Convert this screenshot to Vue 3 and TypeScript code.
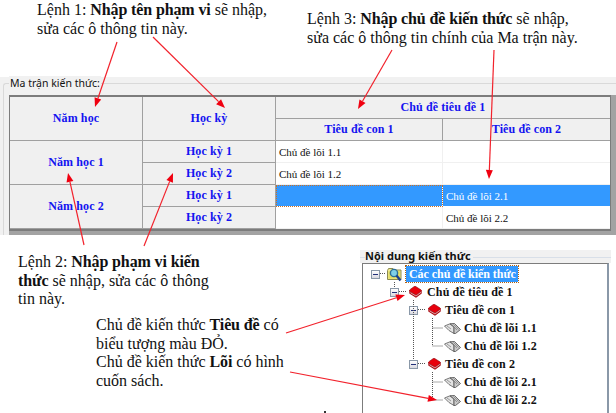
<script setup lang="ts">
interface Arrow { x1: number; y1: number; x2: number; y2: number }
const rawArrows: Arrow[] = [
  { x1: 117, y1: 42, x2: 95, y2: 107 },
  { x1: 153, y1: 37, x2: 225, y2: 108 },
  { x1: 392, y1: 50, x2: 358, y2: 109 },
  { x1: 494, y1: 50, x2: 489, y2: 179 },
  { x1: 84, y1: 245, x2: 68, y2: 173 },
  { x1: 144, y1: 246, x2: 173, y2: 173 },
  { x1: 286, y1: 333, x2: 405, y2: 295 },
  { x1: 290, y1: 372, x2: 437, y2: 400 },
]
const arrows = rawArrows.map((a) => {
  const dx = a.x2 - a.x1
  const dy = a.y2 - a.y1
  const l = Math.hypot(dx, dy)
  const ux = dx / l
  const uy = dy / l
  const bx = a.x2 - ux * 9
  const by = a.y2 - uy * 9
  const points = `${a.x2},${a.y2} ${bx - uy * 3.5},${by + ux * 3.5} ${bx + uy * 3.5},${by - ux * 3.5}`
  return { ...a, bx, by, points }
})

const dots = [
  'M380 273.5H386',
  'M394.5 282V287M399 291.5H407',
  'M413.5 300V359M418 309.5H426M418 363.5H426',
  'M432.5 318V346H443M432.5 328H443',
  'M432.5 372V400H443M432.5 382H443',
]

type Kind = 'folder' | 'red' | 'open'
interface Row { level: number; kind: Kind; label: string; selected?: boolean }
const rows: Row[] = [
  { level: 0, kind: 'folder', label: 'Các chủ đề kiến thức', selected: true },
  { level: 1, kind: 'red', label: 'Chủ đề tiêu đề 1' },
  { level: 2, kind: 'red', label: 'Tiêu đề con 1' },
  { level: 3, kind: 'open', label: 'Chủ đề lõi 1.1' },
  { level: 3, kind: 'open', label: 'Chủ đề lõi 1.2' },
  { level: 2, kind: 'red', label: 'Tiêu đề con 2' },
  { level: 3, kind: 'open', label: 'Chủ đề lõi 2.1' },
  { level: 3, kind: 'open', label: 'Chủ đề lõi 2.2' },
]
</script>

<template>
  <div class="page">
    <section class="matrix">
      <span class="legend">Ma trận kiến thức:</span>
      <div class="frame">
        <div class="grid">
          <div class="h span-r2">Năm học</div>
          <div class="h span-r2">Học kỳ</div>
          <div class="h span-c2 last-col">Chủ đề tiêu đề 1</div>
          <div class="h">Tiêu đề con 1</div>
          <div class="h last-col">Tiêu đề con 2</div>

          <div class="h span-r2">Năm học 1</div>
          <div class="h">Học kỳ 1</div>
          <div class="d">Chủ đề lõi 1.1</div>
          <div class="d last-col"></div>
          <div class="h">Học kỳ 2</div>
          <div class="d">Chủ đề lõi 1.2</div>
          <div class="d last-col"></div>

          <div class="h span-r2">Năm học 2</div>
          <div class="h">Học kỳ 1</div>
          <div class="d sel focus"></div>
          <div class="d sel last-col">Chủ đề lõi 2.1</div>
          <div class="h">Học kỳ 2</div>
          <div class="d"></div>
          <div class="d last-col">Chủ đề lõi 2.2</div>
        </div>
      </div>
    </section>

    <section class="tree-wrap">
      <div class="tree-head"><span class="tree-title">Nội dung kiến thức</span></div>
      <div class="tree">
        <div v-for="r in rows" :key="r.label" class="row" :class="'lv' + r.level">
          <span v-if="r.level < 3" class="exp"><i></i></span>
          <svg v-if="r.kind === 'folder'" class="ic-folder" viewBox="0 0 15 15" width="15" height="15">
            <path d="M0.5 3.5 L1.5 1.5 H6 L7 3 H14 V12.5 H0.5 Z" fill="#f0ea8c" stroke="#8c8a50" />
            <rect x="1.5" y="4" width="11.5" height="7.5" fill="#e4dc64" />
            <circle cx="7" cy="6" r="3.6" fill="#7fd0e8" stroke="#2a6f9a" stroke-width="1.4" />
            <path d="M9.5 8.5 L13.5 13.5" stroke="#1c3f8c" stroke-width="2.4" />
          </svg>
          <svg v-else-if="r.kind === 'red'" class="ic-red" viewBox="0 0 13 12" width="13" height="12">
            <path d="M0.3 5 Q0.3 4 1.5 3.2 L5 0.7 Q6 0 7 0.7 L12.2 4 Q13 4.6 12.2 5.2 L7 9 Z" fill="#e8000c" stroke="#8a0008" stroke-width="0.6" />
            <path d="M0.3 5 V7.6 L7 11.7 L12.7 7.4 V4.8 L7 9 Z" fill="#a80810" />
            <path d="M1.4 6.7 L7 10 L12 6.3" fill="none" stroke="#f3c9c9" stroke-width="0.8" />
          </svg>
          <svg v-else class="ic-open" viewBox="0 0 17 11" width="17" height="11">
            <path d="M0.5 3 L6 0.8 L10 4 V10.5 L5 7.5 Z" fill="#e4e4e4" stroke="#6a6a6a" stroke-width="0.9" />
            <path d="M6 0.8 L10.5 0.5 L16.5 6.5 L11.5 10.5 L10 10.5 V4 Z" fill="#c8c8c8" stroke="#5a5a5a" stroke-width="0.9" />
            <path d="M7.5 1.5 L13 7 M9.5 1.5 L14.5 6.5 M3 3 L7 6" stroke="#7a7a7a" stroke-width="0.7" fill="none" />
          </svg>
          <span class="label" :class="{ selected: r.selected }">{{ r.label }}</span>
        </div>
      </div>
    </section>

    <p class="note n1">Lệnh 1: <b>Nhập tên phạm vi</b> sẽ nhập,<br />sửa các ô thông tin này.</p>
    <p class="note n3">Lệnh 3: <b>Nhập chủ đề kiến thức</b> sẽ nhập,<br />sửa các ô thông tin chính của Ma trận này.</p>
    <p class="note n2">Lệnh 2: <b>Nhập phạm vi kiến</b><br /><b>thức</b> sẽ nhập, sửa các ô thông<br />tin này.</p>
    <p class="note n4">Chủ đề kiến thức <b>Tiêu đề</b> có<br />biểu tượng màu ĐỎ.<br />Chủ đề kiến thức <b>Lõi</b> có hình<br />cuốn sách.</p>
    <span class="speck"></span>

    <svg class="overlay" viewBox="0 0 616 413" width="616" height="413">
      <path v-for="d in dots" :key="d" :d="d" fill="none" stroke="#555" stroke-width="1" stroke-dasharray="1 1" />
      <g v-for="a in arrows" :key="a.x1">
        <line :x1="a.x1" :y1="a.y1" :x2="a.bx" :y2="a.by" stroke="#f2222c" stroke-width="1.2" />
        <polygon :points="a.points" fill="#f00010" />
      </g>
    </svg>
  </div>
</template>

<style>
html, body { margin: 0; background: #fff; }
</style>

<style scoped>
.page {
  position: relative;
  width: 616px;
  height: 413px;
  overflow: hidden;
  background: #fff;
  display: flex;
  flex-direction: column;
}
.matrix {
  position: relative;
  margin-top: 77px;
  height: 158px;
  box-sizing: border-box;
  background: #f1f1f1;
  padding: 18px 0 0 9px;
}
.matrix::before {
  content: "";
  position: absolute;
  left: 3px;
  top: 6px;
  right: 0;
  bottom: 0;
  border: 1px solid #d9d9d9;
  border-right: 0;
  border-bottom: 0;
  border-top-left-radius: 3px;
}
.legend {
  position: absolute;
  left: 9px;
  top: -1px;
  padding: 0 1px;
  background: #f1f1f1;
  font: 10.5px/14px "Noto Sans", sans-serif;
  color: #111;
}
.frame {
  position: relative;
  height: 140px;
  background: #a3a3a3;
}
.grid {
  display: grid;
  grid-template-columns: 133px 133px 167px 167px;
  grid-template-rows: repeat(6, 22px);
  width: 600px;
  border-top: 2px solid #7c7c7c;
  border-left: 1px solid #7c7c7c;
  border-bottom: 2px solid #7c7c7c;
  border-right: 1px solid #7c7c7c;
  font: 12px "Liberation Serif", serif;
  background: #fff;
}
.h {
  display: flex;
  align-items: center;
  justify-content: center;
  background: #f0f0f0;
  color: #1414f0;
  font-weight: bold;
  letter-spacing: 0.1px;
  border-right: 1px solid #a0a0a0;
  border-bottom: 1px solid #a0a0a0;
}
.span-r2 { grid-row: span 2; }
.span-c2 { grid-column: span 2; }
.d {
  display: flex;
  align-items: center;
  padding-left: 3px;
  background: #fff;
  color: #111;
  font-size: 11px;
  border-right: 1px solid #f0f0f0;
  border-bottom: 1px solid #f0f0f0;
}
.last-col { border-right: 0; }
.sel { background: #3399ff; color: #fff; border-right-color: #fff; border-bottom-color: #fff; }
.focus { outline: 1px dotted #d07020; outline-offset: -1px; position: relative; z-index: 1; }

.tree-wrap {
  margin: 15px 5px 0 360px;
  display: flex;
  flex-direction: column;
}
.tree-head {
  height: 13px;
  background: linear-gradient(#f1f1f1 0 7px, #d8dfe8 7px 8px, #f1f1f1 8px);
  display: flex;
}
.tree-title {
  margin-left: 5px;
  height: 13px;
  padding-right: 2px;
  background: #f1f1f1;
  font: bold 11px/12px "Noto Sans", sans-serif;
  color: #111;
}
.tree {
  margin-left: 2px;
  margin-right: 2px;
  border-top: 1px solid #7c7c7c;
  border-left: 1px solid #7c7c7c;
  border-right: 2px solid #8a98a8;
  padding-top: 1px;
  font: bold 12px "Liberation Serif", serif;
  color: #111;
  letter-spacing: 0.15px;
  height: 150px;
}
.row { display: flex; align-items: center; height: 18px; }
.exp {
  box-sizing: border-box;
  width: 9px;
  height: 9px;
  border: 1px solid #8a98a8;
  background: linear-gradient(#fff, #d8d8e0);
  display: flex;
  align-items: center;
  justify-content: center;
  flex: none;
}
.exp i { display: block; width: 5px; height: 1px; background: #23307a; }
.lv0 { padding-left: 8px; }
.lv1 { padding-left: 27px; }
.lv2 { padding-left: 46px; }
.lv3 { padding-left: 81px; }
.lv0 .exp { margin-right: 7px; }
.lv1 .exp, .lv2 .exp { margin-right: 10px; }
.ic-folder, .ic-red, .ic-open { flex: none; }
.lv0 .label { margin-left: 4px; }
.lv1 .label { margin-left: 5px; }
.lv2 .label { margin-left: 4px; }
.lv3 .label { margin-left: 3px; }
.label { white-space: nowrap; }
.selected {
  background: #3399ff;
  color: #fff;
  padding: 0 2px 0 3px;
  line-height: 16px;
  letter-spacing: -0.05px;
  outline: 1px dotted #b06010;
}

.note {
  position: absolute;
  margin: 0;
  font: 16px/18.7px "Liberation Serif", serif;
  color: #111;
  white-space: nowrap;
}
.note b { letter-spacing: -0.12px; }
.n1 { left: 37px; top: 1px; }
.n3 { left: 307px; top: 10px; }
.n2 { left: 18px; top: 253px; }
.n4 { left: 96px; top: 316px; }
.speck {
  position: absolute;
  left: 324px;
  top: 411px;
  width: 2px;
  height: 2px;
  background: #333;
}
.overlay { position: absolute; left: 0; top: 0; pointer-events: none; }
</style>
